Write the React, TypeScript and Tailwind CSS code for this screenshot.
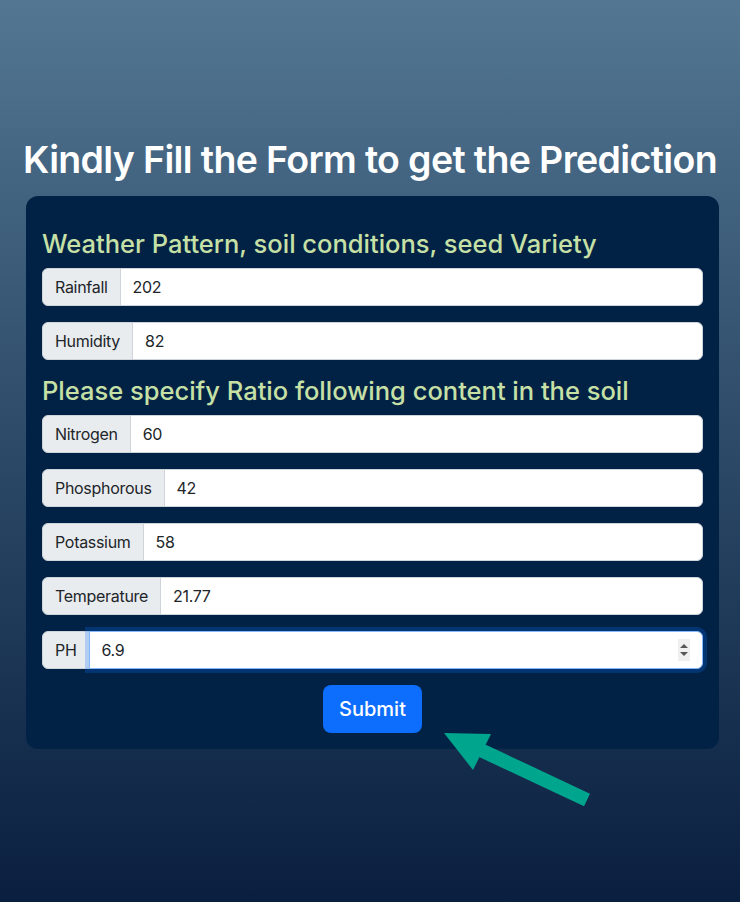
const fields1 = [
  { label: 'Rainfall', value: '202' },
  { label: 'Humidity', value: '82' },
]

const fields2 = [
  { label: 'Nitrogen', value: '60' },
  { label: 'Phosphorous', value: '42' },
  { label: 'Potassium', value: '58' },
  { label: 'Temperature', value: '21.77' },
]

function Field({ label, value, focused }: { label: string; value: string; focused?: boolean }) {
  return (
    <div className="flex h-[38px] mb-4 text-[16px] text-[#212529] tracking-[-0.3px]">
      <span className="flex items-center px-3 bg-[#e9ecef] border border-[#ced4da] rounded-l-md">
        {label}
      </span>
      {focused ? (
        <div className="flex-1 flex items-center bg-white border border-[#86b7fe] rounded-r-md -ml-px shadow-[0_0_0_4px_rgba(13,110,253,0.25)] pl-3 pr-3">
          <span className="flex-1">{value}</span>
          <span className="flex flex-col items-center justify-center w-[12px] h-[22px] bg-[#efefef] text-[#555]">
            <svg width="8" height="6" viewBox="0 0 8 6"><path d="M0 5 L4 1 L8 5 Z" fill="currentColor" /></svg>
            <svg width="8" height="6" viewBox="0 0 8 6" className="mt-[2px]"><path d="M0 1 L4 5 L8 1 Z" fill="currentColor" /></svg>
          </span>
        </div>
      ) : (
        <div className="flex-1 flex items-center bg-white border border-[#ced4da] rounded-r-md -ml-px px-3">
          {value}
        </div>
      )}
    </div>
  )
}

export default function App() {
  return (
    <div className="relative min-h-[902px] bg-gradient-to-b from-[#537792] to-[#0a1f40] font-['Inter',sans-serif] pt-[137px]">
      <h1 className="text-center text-white text-[37.5px] font-semibold leading-[1.2] mb-[14px] tracking-[-0.65px]">
        Kindly Fill the Form to get the Prediction
      </h1>
      <div className="mx-[26px] w-[693px] bg-[#012245] rounded-xl px-4 pt-[33px] pb-4">
        <h3 className="text-[#c6e0a6] text-[25.5px] font-medium leading-[1.2] mb-2">
          Weather Pattern, soil conditions, seed Variety
        </h3>
        {fields1.map((f) => (
          <Field key={f.label} label={f.label} value={f.value} />
        ))}
        <h3 className="text-[#c6e0a6] text-[25.5px] font-medium leading-[1.2] mt-[6px] mb-[9px]">
          Please specify Ratio following content in the soil
        </h3>
        {fields2.map((f) => (
          <Field key={f.label} label={f.label} value={f.value} />
        ))}
        <Field label="PH" value="6.9" focused />
        <div className="flex justify-center">
          <button className="bg-[#0d6efd] text-white text-[20px] font-medium px-4 h-[48px] rounded-lg">Submit</button>
        </div>
      </div>
      <svg className="absolute left-[440px] top-[728px]" width="160" height="82" viewBox="440 728 160 82">
        <line x1="587" y1="800" x2="470" y2="745" stroke="#00a58e" strokeWidth="14" />
        <path d="M444 733 L491 734 L473 770 Z" fill="#00a58e" />
      </svg>
    </div>
  )
}
